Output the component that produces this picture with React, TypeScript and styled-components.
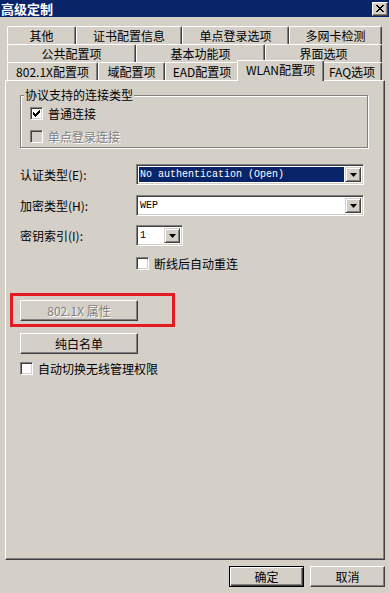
import { createGlobalStyle } from 'styled-components';
import styled from 'styled-components';

const GlobalStyle = createGlobalStyle`
  html, body {
    margin: 0;
    padding: 0;
    background: #d4d0c8;
  }
  * {
    box-sizing: border-box;
  }
`;

const Window = styled.div`
  width: 389px;
  height: 593px;
  display: flex;
  flex-direction: column;
  background: #d4d0c8;
  font-family: 'Noto Sans CJK SC', 'Liberation Sans', sans-serif;
  font-size: 12px;
  color: #000;
  overflow: hidden;
`;

const TitleBar = styled.div`
  height: 17px;
  background: #0a246a;
  display: flex;
  align-items: center;
  justify-content: space-between;
  padding: 0 1px 0 1px;
`;

const Title = styled.span`
  color: #fff;
  font-weight: bold;
  font-size: 13px;
  line-height: 17px;
  letter-spacing: 0;
`;

const CloseButton = styled.div`
  width: 16px;
  height: 14px;
  background: #d4d0c8;
  border: 1px solid;
  border-color: #fff #404040 #404040 #fff;
  box-shadow: inset -1px -1px #808080;
  display: flex;
  align-items: center;
  justify-content: center;
`;

const Body = styled.div`
  flex: 1;
  display: flex;
  flex-direction: column;
  padding: 9px 4px 0 5px;
`;

const TabStrip = styled.div`
  padding: 0 3px 0 2px;
  display: flex;
  flex-direction: column;
`;

const TabRow = styled.div`
  display: flex;
  height: 18px;
  align-items: flex-end;
`;

const Tab = styled.div<{ $w: number; $active?: boolean }>`
  position: relative;
  width: ${({ $w, $active }) => ($active ? $w + 4 : $w)}px;
  height: ${({ $active }) => ($active ? 21 : 18)}px;
  margin: ${({ $active }) => ($active ? '0 -2px -1px -2px' : '0')};
  z-index: ${({ $active }) => ($active ? 2 : 0)};
  background: #d4d0c8;
  border-top: 1px solid #fff;
  border-left: 1px solid #fff;
  border-right: 1px solid #404040;
  border-radius: 2px 2px 0 0;
  box-shadow: inset -1px 0 #808080;
  display: flex;
  align-items: center;
  justify-content: center;
  padding-bottom: ${({ $active }) => ($active ? 2 : 0)}px;
  white-space: nowrap;
  line-height: 1;
`;

const Panel = styled.div`
  position: relative;
  z-index: 1;
  height: 480px;
  border: 1px solid;
  border-color: #fff #404040 #404040 #fff;
  box-shadow: inset -1px -1px #808080;
  padding: 0 14px;
  display: flex;
  flex-direction: column;
  align-items: flex-start;
`;

const GroupBox = styled.div`
  position: relative;
  margin-top: 14px;
  width: 348px;
  height: 53px;
  border: 1px solid #808080;
  box-shadow: inset 1px 1px #fff, 1px 1px #fff;
  padding: 11px 0 0 9px;
  display: flex;
  flex-direction: column;
  gap: 10px;
`;

const GroupCaption = styled.span`
  position: absolute;
  top: -8px;
  left: 3px;
  padding: 0 1px;
  background: #d4d0c8;
  line-height: 14px;
`;

const CheckRow = styled.label<{ $mt?: number; $ml?: number; $disabled?: boolean }>`
  display: flex;
  align-items: center;
  gap: 5px;
  height: 13px;
  margin-top: ${({ $mt }) => $mt ?? 0}px;
  margin-left: ${({ $ml }) => $ml ?? 0}px;
  color: ${({ $disabled }) => ($disabled ? '#808080' : '#000')};
  text-shadow: ${({ $disabled }) => ($disabled ? '1px 1px #fff' : 'none')};
  line-height: 13px;
  white-space: nowrap;
`;

const CheckBox = styled.span<{ $disabled?: boolean }>`
  width: 13px;
  height: 13px;
  flex: none;
  border: 1px solid;
  border-color: #808080 #fff #fff #808080;
  box-shadow: inset 1px 1px #404040, inset -1px -1px #d4d0c8;
  background: ${({ $disabled }) => ($disabled ? '#d4d0c8' : '#fff')};
  display: flex;
  align-items: center;
  justify-content: center;
`;

const FormRow = styled.div<{ $mt: number }>`
  display: flex;
  align-items: center;
  height: 21px;
  margin-top: ${({ $mt }) => $mt}px;
`;

const FieldLabel = styled.span`
  width: 116px;
  flex: none;
  white-space: nowrap;
`;

const Combo = styled.div<{ $w: number }>`
  width: ${({ $w }) => $w}px;
  height: 21px;
  border: 1px solid;
  border-color: #808080 #fff #fff #808080;
  box-shadow: inset 1px 1px #404040, inset -1px -1px #d4d0c8;
  background: #fff;
  padding: 2px;
  display: flex;
`;

const ComboValue = styled.span<{ $selected?: boolean }>`
  flex: 1;
  display: flex;
  align-items: center;
  padding-left: 1px;
  margin-right: 1px;
  background: ${({ $selected }) => ($selected ? '#0a246a' : 'transparent')};
  color: ${({ $selected }) => ($selected ? '#fff' : '#000')};
  font-family: 'Liberation Mono', 'DejaVu Sans Mono', monospace;
  font-size: 10px;
  white-space: nowrap;
`;

const DropButton = styled.span`
  width: 16px;
  height: 100%;
  flex: none;
  background: #d4d0c8;
  border: 1px solid;
  border-color: #d4d0c8 #404040 #404040 #d4d0c8;
  box-shadow: inset 1px 1px #fff, inset -1px -1px #808080;
  display: flex;
  align-items: center;
  justify-content: center;
`;

const Highlight = styled.div`
  margin: 23px 0 0 -10px;
  width: 165px;
  border: 3px solid #e31b23;
  padding: 4px 0 3px 7px;
`;

const Button = styled.button<{ $w: number; $mt?: number; $default?: boolean }>`
  width: ${({ $w }) => $w}px;
  height: 21px;
  margin-top: ${({ $mt }) => $mt ?? 0}px;
  padding: 0;
  background: #d4d0c8;
  font-family: inherit;
  font-size: 12px;
  color: #000;
  line-height: 1;
  border: 1px solid;
  border-color: ${({ $default }) => ($default ? '#000' : '#fff #404040 #404040 #fff')};
  box-shadow: ${({ $default }) =>
    $default
      ? 'inset 1px 1px #fff, inset -1px -1px #404040, inset -2px -2px #808080'
      : 'inset -1px -1px #808080'};
  &:disabled {
    color: #808080;
    text-shadow: 1px 1px #fff;
  }
`;

const Footer = styled.div`
  display: flex;
  justify-content: flex-end;
  gap: 6px;
  padding: 6px 0 0 0;
`;

const Arrow = () => (
  <svg width="7" height="4" viewBox="0 0 7 4">
    <polygon points="0,0 7,0 3.5,4" fill="#000" />
  </svg>
);

const Check = () => (
  <svg width="9" height="9" viewBox="0 0 9 9" shapeRendering="crispEdges">
    <path d="M1 3h1v1h1v1h1v-1h1v-1h1v-1h1v-1h1v3h-1v1h-1v1h-1v1h-1v1h-1v-1h-1v-1h-1z" fill="#000" />
  </svg>
);

const rows: { label: string; w: number }[][] = [
  [
    { label: '其他', w: 69 },
    { label: '证书配置信息', w: 106 },
    { label: '单点登录选项', w: 107 },
    { label: '多网卡检测', w: 93 },
  ],
  [
    { label: '公共配置项', w: 129 },
    { label: '基本功能项', w: 129 },
    { label: '界面选项', w: 117 },
  ],
  [
    { label: '802.1X配置项', w: 91 },
    { label: '域配置项', w: 67 },
    { label: 'EAD配置项', w: 74 },
    { label: 'WLAN配置项', w: 83 },
    { label: 'FAQ选项', w: 60 },
  ],
];

const App = () => {
  return (
    <>
      <GlobalStyle />
      <Window>
        <TitleBar>
          <Title>高级定制</Title>
          <CloseButton>
            <svg width="8" height="7" viewBox="0 0 8 7" shapeRendering="crispEdges">
              <path d="M0 0h2v1h1v1h2v-1h1v-1h2v1h-1v1h-1v1h-1v1h1v1h1v1h1v1h-2v-1h-1v-1h-2v1h-1v1h-2v-1h1v-1h1v-1h1v-1h-1v-1h-1z" fill="#000" />
            </svg>
          </CloseButton>
        </TitleBar>
        <Body>
          <TabStrip>
            {rows.map((row, i) => (
              <TabRow key={i}>
                {row.map((t) => (
                  <Tab key={t.label} $w={t.w} $active={t.label === 'WLAN配置项'}>
                    {t.label}
                  </Tab>
                ))}
              </TabRow>
            ))}
          </TabStrip>
          <Panel>
            <GroupBox>
              <GroupCaption>协议支持的连接类型</GroupCaption>
              <CheckRow>
                <CheckBox>
                  <Check />
                </CheckBox>
                普通连接
              </CheckRow>
              <CheckRow $disabled>
                <CheckBox $disabled />
                单点登录连接
              </CheckRow>
            </GroupBox>

            <FormRow $mt={16}>
              <FieldLabel>认证类型(E):</FieldLabel>
              <Combo $w={228}>
                <ComboValue $selected>No authentication (Open)</ComboValue>
                <DropButton>
                  <Arrow />
                </DropButton>
              </Combo>
            </FormRow>
            <FormRow $mt={10}>
              <FieldLabel>加密类型(H):</FieldLabel>
              <Combo $w={228}>
                <ComboValue>WEP</ComboValue>
                <DropButton>
                  <Arrow />
                </DropButton>
              </Combo>
            </FormRow>
            <FormRow $mt={9}>
              <FieldLabel>密钥索引(I):</FieldLabel>
              <Combo $w={47}>
                <ComboValue>1</ComboValue>
                <DropButton>
                  <Arrow />
                </DropButton>
              </Combo>
            </FormRow>
            <CheckRow $mt={11} $ml={116}>
              <CheckBox />
              断线后自动重连
            </CheckRow>

            <Highlight>
              <Button $w={118} disabled>
                802.1X 属性
              </Button>
            </Highlight>
            <Button $w={118} $mt={6}>
              纯白名单
            </Button>
            <CheckRow $mt={8}>
              <CheckBox />
              自动切换无线管理权限
            </CheckRow>
          </Panel>
          <Footer>
            <Button $w={75} $default>
              确定
            </Button>
            <Button $w={75}>取消</Button>
          </Footer>
        </Body>
      </Window>
    </>
  );
};

export default App;
